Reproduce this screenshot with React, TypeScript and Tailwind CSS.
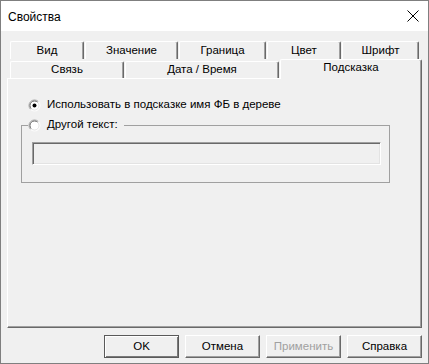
import React from "react";

const tabBase =
  "flex items-center justify-center bg-[#f0f0f0] border-l border-t border-r border-l-white border-t-white border-r-[#696969] rounded-t-[2px] shadow-[inset_-1px_0_#a0a0a0]";

function Tab({ w, label, h = "h-[18px]" }: { w: string; label: string; h?: string }) {
  return <div className={`${tabBase} ${w} ${h}`}>{label}</div>;
}

function Radio({ checked }: { checked?: boolean }) {
  return (
    <svg width="13" height="13" viewBox="0 0 13 13" className="shrink-0">
      <circle cx="6.5" cy="6.5" r="5.5" fill="#ffffff" />
      <path d="M2.6 10.4 A5.5 5.5 0 0 1 10.4 2.6" fill="none" stroke="#a0a0a0" strokeWidth="1" />
      <path d="M10.4 2.6 A5.5 5.5 0 0 1 2.6 10.4" fill="none" stroke="#ffffff" strokeWidth="1" />
      <path d="M3.3 9.7 A4.5 4.5 0 0 1 9.7 3.3" fill="none" stroke="#696969" strokeWidth="1" />
      <path d="M9.7 3.3 A4.5 4.5 0 0 1 3.3 9.7" fill="none" stroke="#e3e3e3" strokeWidth="1" />
      {checked && <circle cx="6.5" cy="6.5" r="2" fill="#000000" />}
    </svg>
  );
}

function Btn({ label, def, disabled }: { label: string; def?: boolean; disabled?: boolean }) {
  const cls = def
    ? "border border-[#5a5a5a] shadow-[inset_1px_1px_#ffffff,inset_-1px_-1px_#7a7a7a]"
    : "border border-t-white border-l-white border-r-[#696969] border-b-[#696969] shadow-[inset_-1px_-1px_#a0a0a0]";
  return (
    <div
      className={`w-[75px] h-[23px] flex items-center justify-center bg-[#f0f0f0] ${cls} ${
        disabled ? "text-[#a0a0a0]" : "text-black"
      }`}
    >
      {label}
    </div>
  );
}

export default function App() {
  return (
    <div className="w-[429px] h-[364px] border border-[#7f7f7f] bg-[#f0f0f0] flex flex-col font-['Liberation_Sans',Arial,sans-serif] text-[11.5px] text-black leading-none">
      {/* Title bar */}
      <div className="h-[30px] bg-white flex items-center justify-between pl-[7px] pr-[9px] shrink-0">
        <span className="text-[12px] pt-[1px]">Свойства</span>
        <svg width="12" height="12" viewBox="0 0 12 12">
          <path d="M0.5 0.5 L11.5 11.5 M11.5 0.5 L0.5 11.5" stroke="#000" strokeWidth="1" />
        </svg>
      </div>

      {/* Body */}
      <div className="flex flex-col pt-[10px]">
        {/* Tabs row 1 */}
        <div className="flex gap-[1px] pl-[9px]">
          <Tab w="w-[74px]" label="Вид" />
          <Tab w="w-[93px]" label="Значение" />
          <Tab w="w-[87px]" label="Граница" />
          <Tab w="w-[74px]" label="Цвет" />
          <Tab w="w-[77px]" label="Шрифт" />
        </div>
        {/* Tabs row 2 */}
        <div className="flex items-end gap-[1px] pl-[9px]">
          <Tab w="w-[114px]" label="Связь" h="h-[17px]" />
          <Tab w="w-[154px]" label="Дата / Время" h="h-[17px]" />
          <div className="relative z-10 -mb-[1px] w-[142px] h-[20px] bg-[#f0f0f0] flex items-center justify-center pb-[3px] border-l border-t border-r border-l-white border-t-white border-r-[#696969] rounded-t-[2px] shadow-[inset_-1px_0_#a0a0a0]">
            Подсказка
          </div>
        </div>

        {/* Panel */}
        <div className="ml-[6px] w-[415px] h-[250px] bg-[#f0f0f0] border border-t-white border-l-white border-r-[#696969] border-b-[#696969] shadow-[inset_-1px_-1px_#a0a0a0] pt-[19px] pl-[13px] flex flex-col">
          <div className="flex items-center h-[14px] ml-[7px] gap-[6px]">
            <Radio checked />
            <span>Использовать в подсказке имя ФБ в дереве</span>
          </div>

          {/* Group box */}
          <div className="w-[369px] mt-[6px] flex flex-col">
            <div className="flex items-center h-[14px]">
              <div className="w-[7px] h-[7px] self-end border-l border-t border-[#a0a0a0]" />
              <Radio />
              <span className="ml-[6px] mr-[6px]">Другой текст:</span>
              <div className="flex-1 h-[7px] self-end border-t border-r border-[#a0a0a0]" />
            </div>
            <div className="h-[51px] border-l border-r border-b border-[#a0a0a0] pl-[10px] pt-[10px]">
              <div className="w-[349px] h-[23px] bg-[#f0f0f0] border border-t-[#a0a0a0] border-l-[#a0a0a0] border-r-white border-b-white shadow-[inset_1px_1px_#696969,inset_-1px_-1px_#e3e3e3]" />
            </div>
          </div>
        </div>

        {/* Buttons */}
        <div className="flex justify-end gap-[6px] pr-[6px] mt-[7px]">
          <Btn label="OK" def />
          <Btn label="Отмена" />
          <Btn label="Применить" disabled />
          <Btn label="Справка" />
        </div>
      </div>
    </div>
  );
}
